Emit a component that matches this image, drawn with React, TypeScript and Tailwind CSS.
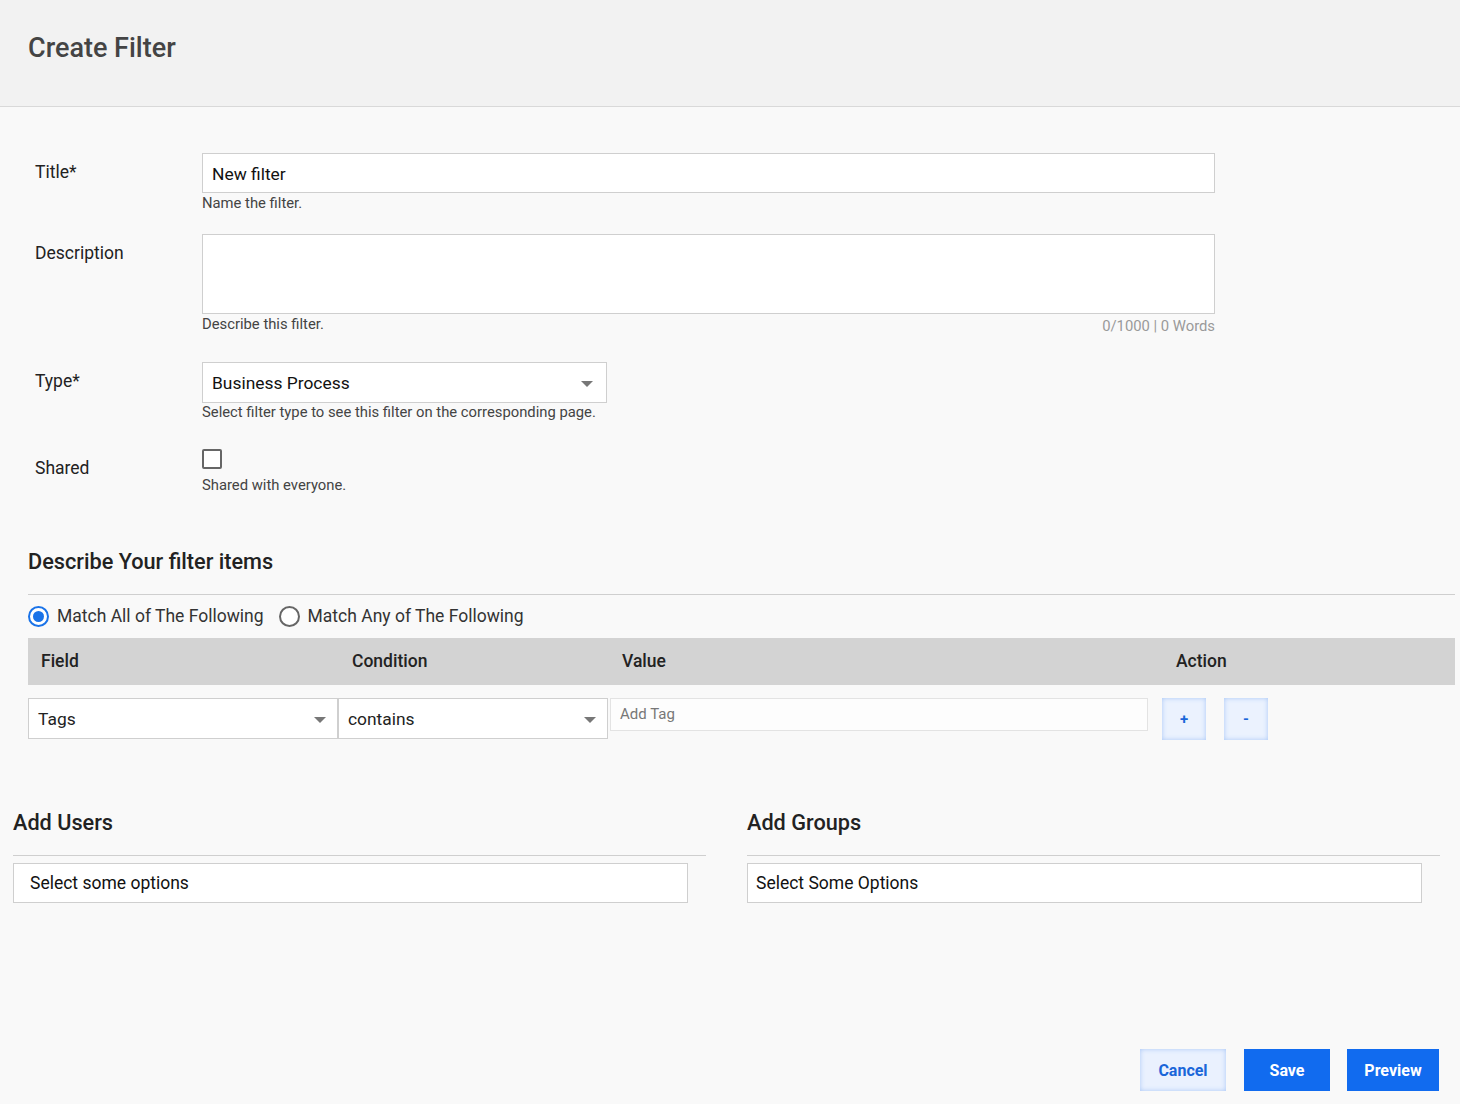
import React from 'react';

const font = { fontFamily: 'Roboto, "Noto Sans", sans-serif' };

const Caret: React.FC = () => (
    <span className="w-0 h-0 border-l-[6px] border-r-[6px] border-t-[6px] border-l-transparent border-r-transparent border-t-[#777]" />
);

const FormRow: React.FC<{ label: string; children: React.ReactNode; className?: string }> = ({ label, children, className }) => (
    <div className={`flex items-start ${className || ''}`}>
        <label className="w-[167px] flex-shrink-0 pt-[7px] text-[17.5px] text-[#222] leading-6">{label}</label>
        <div className="flex-1 min-w-0">{children}</div>
    </div>
);

const Radio: React.FC<{ checked?: boolean; label: string }> = ({ checked, label }) => (
    <label className="flex items-center gap-2 text-[17.5px] text-[#333]">
        <span
            className={`w-[21px] h-[21px] rounded-full border-2 flex items-center justify-center bg-white ${
                checked ? 'border-[#1a73e8]' : 'border-[#666]'
            }`}
        >
            {checked && <span className="w-[11px] h-[11px] rounded-full bg-[#1a73e8]" />}
        </span>
        {label}
    </label>
);

const ActionButton: React.FC<{ children: React.ReactNode }> = ({ children }) => (
    <button className="w-[44px] h-[42px] bg-[#ebf2fe] text-[#1a66d9] font-bold text-[15px] shadow-[inset_0_0_5px_#a9c7f7] flex items-center justify-center">
        {children}
    </button>
);

export default function App() {
    return (
        <div className="min-h-screen w-[1460px] bg-[#f9f9f9]" style={font}>
            <header className="h-[107px] bg-[#f2f2f2] border-b border-[#d9d9d9] flex items-center px-[28px] pb-[9px]">
                <h1 className="text-[27px] font-medium text-[#444]">Create Filter</h1>
            </header>

            <section className="pl-[35px] pt-[46px] w-[1215px]">
                <FormRow label="Title*">
                    <div className="h-[40px] bg-white border border-[#cfcfcf] flex items-center px-[9px] pt-[2px] text-[17.4px] text-[#111]">
                        New filter
                    </div>
                    <p className="text-[14.8px] text-[#444] leading-5">Name the filter.</p>
                </FormRow>
                <FormRow label="Description" className="mt-[21px]">
                    <div className="h-[80px] bg-white border border-[#cfcfcf]" />
                    <div className="flex justify-between items-start h-[22px]">
                        <p className="text-[14.8px] text-[#444] leading-5">Describe this filter.</p>
                        <p className="text-[14.8px] text-[#999] leading-5 mt-[2px]">0/1000 | 0 Words</p>
                    </div>
                </FormRow>
                <FormRow label="Type*" className="mt-[26px]">
                    <div className="w-[405px] h-[41px] bg-white border border-[#cfcfcf] flex items-center justify-between pl-[9px] pr-[13px] pt-[2px] text-[17.4px] text-[#111]">
                        Business Process
                        <Caret />
                    </div>
                    <p className="text-[14.8px] text-[#444] leading-[18px]">
                        Select filter type to see this filter on the corresponding page.
                    </p>
                </FormRow>
                <FormRow label="Shared" className="mt-[28px]">
                    <span className="block w-[20px] h-[20px] border-2 border-[#666] rounded-[2px] bg-white" />
                    <p className="text-[14.8px] text-[#444] mt-[6px] leading-5">Shared with everyone.</p>
                </FormRow>
            </section>

            <section className="pl-[28px] pr-[5px] mt-[52px]">
                <h2 className="text-[21.7px] font-medium text-[#222] leading-7 pt-[1px]">Describe Your filter items</h2>
                <div className="border-b border-[#cfcfcf] mt-[18px]" />
                <div className="flex items-center gap-[15px] h-[42px] mb-[1px]">
                    <Radio checked label="Match All of The Following" />
                    <Radio label="Match Any of The Following" />
                </div>
                <div className="h-[47px] bg-[#d3d3d3] flex items-center text-[17.5px] font-medium text-[#222]">
                    <div className="w-[310px] pl-[13px]">Field</div>
                    <div className="w-[270px] pl-[14px]">Condition</div>
                    <div className="w-[554px] pl-[14px]">Value</div>
                    <div className="pl-[14px]">Action</div>
                </div>
                <div className="flex items-start mt-[13px]">
                    <div className="w-[310px] h-[41px] bg-white border border-[#cfcfcf] flex items-center justify-between pl-[9px] pr-[11px] pt-[2px] text-[17.4px] text-[#222]">
                        Tags
                        <Caret />
                    </div>
                    <div className="w-[270px] h-[41px] bg-white border border-[#cfcfcf] flex items-center justify-between pl-[9px] pr-[11px] pt-[2px] text-[17.4px] text-[#222]">
                        contains
                        <Caret />
                    </div>
                    <div className="ml-[2px] w-[538px] h-[33px] bg-[#fdfdfd] border border-[#e3e3e3] flex items-center px-[9px] text-[15px] text-[#777]">
                        Add Tag
                    </div>
                    <div className="ml-[14px] flex gap-[18px]">
                        <ActionButton>+</ActionButton>
                        <ActionButton>-</ActionButton>
                    </div>
                </div>
            </section>

            <section className="flex pl-[13px] mt-[68px]">
                <div className="w-[693px]">
                    <h2 className="text-[21.7px] font-medium text-[#222] leading-7 pt-[1px]">Add Users</h2>
                    <div className="border-b border-[#cfcfcf] mt-[18px]" />
                    <div className="w-[675px] h-[40px] mt-[7px] bg-white border border-[#cfcfcf] flex items-center px-[16px] text-[17.5px] text-[#111]">
                        Select some options
                    </div>
                </div>
                <div className="w-[693px] ml-[41px]">
                    <h2 className="text-[21.7px] font-medium text-[#222] leading-7 pt-[1px]">Add Groups</h2>
                    <div className="border-b border-[#cfcfcf] mt-[18px]" />
                    <div className="w-[675px] h-[40px] mt-[7px] bg-white border border-[#cfcfcf] flex items-center px-[8px] text-[17.5px] text-[#111]">
                        Select Some Options
                    </div>
                </div>
            </section>

            <footer className="flex justify-end gap-[18px] pr-[21px] mt-[146px] pb-[13px]">
                <button className="w-[86px] h-[42px] pt-[1px] bg-[#eaf1fe] text-[#1a66d9] font-bold text-[16px] shadow-[inset_0_0_5px_#a9c7f7]">
                    Cancel
                </button>
                <button className="w-[86px] h-[42px] pt-[1px] bg-[#116bef] text-white font-bold text-[16px]">Save</button>
                <button className="w-[92px] h-[42px] pt-[1px] bg-[#116bef] text-white font-bold text-[16px] -ml-[1px]">Preview</button>
            </footer>
        </div>
    );
}
